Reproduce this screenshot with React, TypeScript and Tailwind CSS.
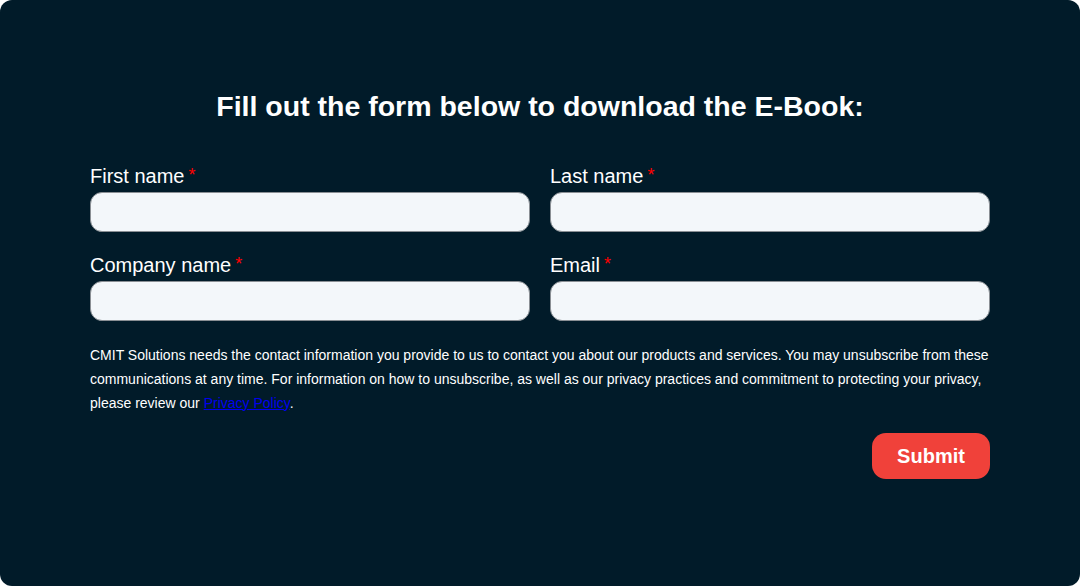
import React from "react";

function Field({ label }: { label: string }) {
  return (
    <div className="flex flex-col">
      <label className="text-[20px] leading-[24px] text-white h-[24px]">
        {label}
        <span className="text-[#ff0000] ml-[4px] text-[18px] relative top-[-2px]">*</span>
      </label>
      <input
        type="text"
        className="mt-[4px] h-[40px] w-full rounded-[12px] border border-[#8a8f94] bg-[#f3f7fa] outline-none"
      />
    </div>
  );
}

export default function App() {
  return (
    <div className="w-[1080px] h-[586px] bg-white" style={{ fontFamily: '"Liberation Sans", Arial, sans-serif' }}>
      <div className="w-full h-full rounded-[12px] bg-[#011b29] px-[90px] pt-[88px]">
        <h1 className="text-center text-white font-bold text-[28.5px] leading-[36px]">
          Fill out the form below to download the E-Book:
        </h1>
        <div className="mt-[40px] grid grid-cols-2 gap-x-[20px] gap-y-[21px]">
          <Field label="First name" />
          <Field label="Last name" />
          <Field label="Company name" />
          <Field label="Email" />
        </div>
        <p className="mt-[22px] text-[14px] leading-[24px] text-white">
          CMIT Solutions needs the contact information you provide to us to contact you about our products and services. You may unsubscribe from these communications at any time. For information on how to unsubscribe, as well as our privacy practices and commitment to protecting your privacy, please review our{" "}
          <a href="#" className="text-[#0000ee] underline">Privacy Policy</a>.
        </p>
        <div className="mt-[18px] flex justify-end">
          <button className="h-[46px] w-[118px] rounded-[14px] bg-[#f0413a] text-white font-bold text-[20px]">
            Submit
          </button>
        </div>
      </div>
    </div>
  );
}
